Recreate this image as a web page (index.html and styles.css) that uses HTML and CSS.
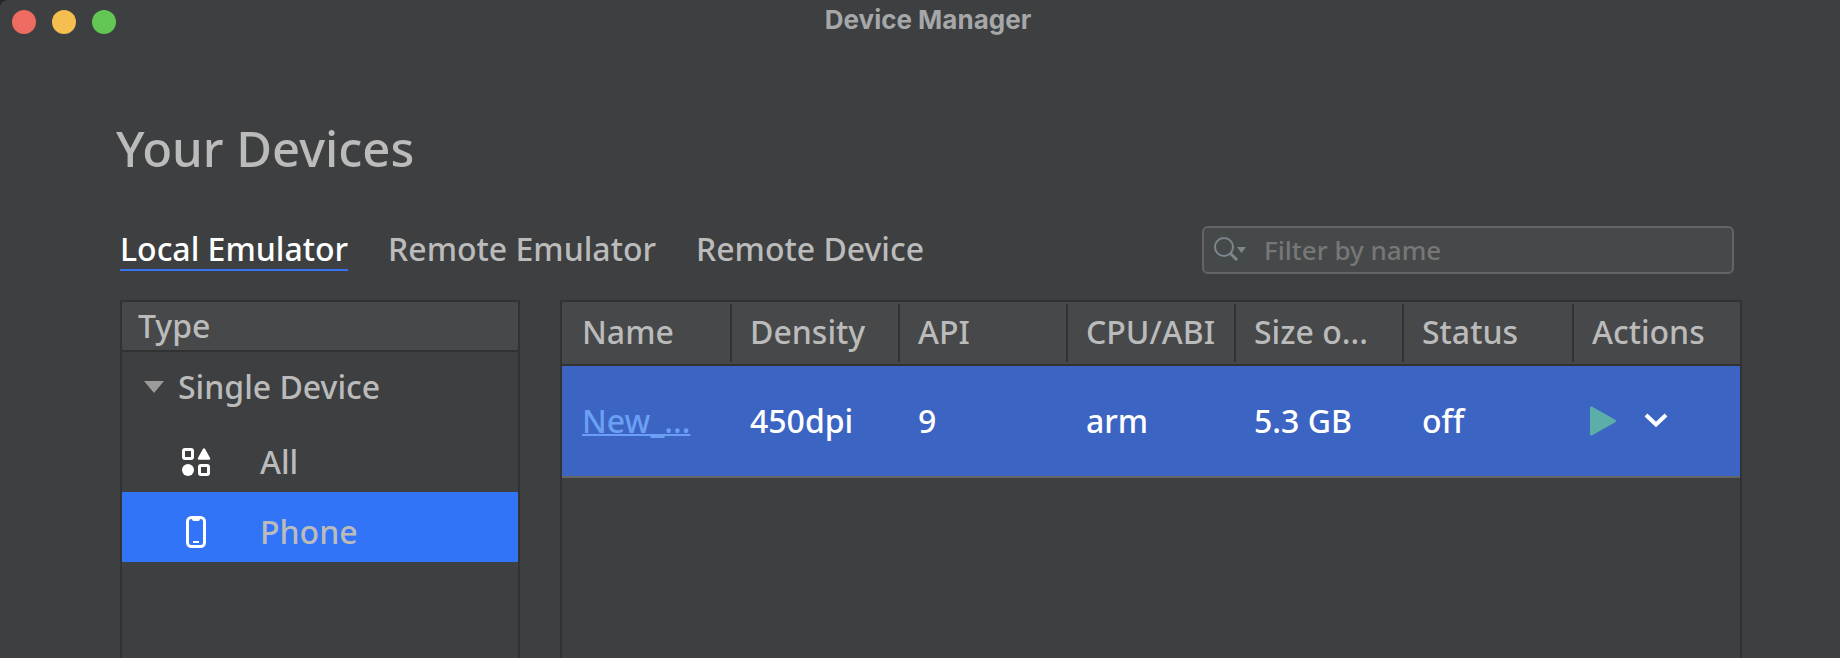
FILE: index.html
```html
<!DOCTYPE html>
<html lang="en">
<head>
<meta charset="utf-8">
<title>Device Manager</title>
<link rel="stylesheet" href="styles.css">
</head>
<body>
<div class="window">
  <header class="titlebar">
    <div class="lights">
      <button class="light close" aria-label="Close"></button>
      <button class="light minimize" aria-label="Minimize"></button>
      <button class="light zoom" aria-label="Zoom"></button>
    </div>
    <div class="window-title">Device Manager</div>
  </header>
  <main class="content">
    <h1 class="heading">Your Devices</h1>
    <div class="toolbar">
      <nav class="tabs">
        <button class="tab active">Local Emulator</button>
        <button class="tab">Remote Emulator</button>
        <button class="tab">Remote Device</button>
      </nav>
      <label class="search">
        <svg class="search-icon" width="34" height="28" viewBox="0 0 34 28" aria-hidden="true">
          <circle cx="10" cy="11" r="9" fill="none" stroke="#7d868d" stroke-width="2"/>
          <path d="M16 17l7 7" stroke="#7d868d" stroke-width="3"/>
          <path d="M23 11h9l-4.500 6z" fill="#7d868d"/>
        </svg>
        <input class="search-input" type="text" placeholder="Filter by name" aria-label="Filter by name">
      </label>
    </div>
    <div class="panels">
      <aside class="types">
        <h2 class="types-header">Type</h2>
        <button class="group">
          <svg class="caret" width="20" height="12" viewBox="0 0 20 12" aria-hidden="true"><path d="M0 0h20L10 12z" fill="#9b9b9b"/></svg>
          Single Device
        </button>
        <button class="type">
          <svg class="type-icon" width="32" height="32" viewBox="0 0 32 32" aria-hidden="true">
            <g fill="none" stroke="#fff" stroke-width="3"><rect x="3.500" y="3.500" width="9" height="9" rx="1.500"/><rect x="19.500" y="19.500" width="9" height="9" rx="1.500"/></g>
            <path d="M24 3.500l5 9h-10z" fill="#fff" stroke="#fff" stroke-width="2.500" stroke-linejoin="round"/>
            <circle cx="8" cy="24" r="6" fill="#fff"/>
          </svg>
          All
        </button>
        <button class="type selected">
          <svg class="type-icon" width="32" height="32" viewBox="0 0 32 32" aria-hidden="true">
            <rect x="7.500" y="1.500" width="17" height="29" rx="4" fill="none" stroke="#fff" stroke-width="3"/>
            <path d="M12 2h8v1q0 2-2 2h-4q-2 0-2-2z" fill="#fff"/>
            <path d="M13 26h6" stroke="#fff" stroke-width="2"/>
          </svg>
          Phone
        </button>
      </aside>
      <section class="devices">
        <table class="table">
          <colgroup>
            <col class="col-wide"><col class="col"><col class="col"><col class="col"><col class="col"><col class="col-wide"><col>
          </colgroup>
          <thead>
            <tr>
              <th><span class="head">Name</span></th>
              <th><span class="head">Density</span></th>
              <th><span class="head">API</span></th>
              <th><span class="head">CPU/ABI</span></th>
              <th><span class="head">Size o...</span></th>
              <th><span class="head">Status</span></th>
              <th><span class="head">Actions</span></th>
            </tr>
          </thead>
          <tbody>
            <tr>
              <td><a class="device-link" href="#">New_...</a></td>
              <td>450dpi</td>
              <td>9</td>
              <td>arm</td>
              <td>5.3 GB</td>
              <td>off</td>
              <td class="actions-cell">
                <div class="actions">
                  <button class="action" aria-label="Launch">
                    <svg width="28" height="32" viewBox="0 0 28 32" aria-hidden="true"><path d="M3.500 3v26l23-13z" fill="#5cafa8" stroke="#5cafa8" stroke-width="3" stroke-linejoin="round"/></svg>
                  </button>
                  <button class="action" aria-label="More actions">
                    <svg width="24" height="32" viewBox="0 0 24 32" aria-hidden="true"><path d="M2 10l10 9.500L22 10" fill="none" stroke="#fff" stroke-width="4"/></svg>
                  </button>
                </div>
              </td>
            </tr>
          </tbody>
        </table>
      </section>
    </div>
  </main>
</div>
</body>
</html>
```
FILE: styles.css
```css
* { box-sizing: border-box; }
html { background: #25282b; }
body {
  margin: 0;
  color: #bbb;
  font-family: "Noto Sans", sans-serif;
  font-size: 32px;
  font-weight: 500;
  line-height: 40px;
}
button {
  padding: 0;
  border: 0;
  background: none;
  color: inherit;
  font: inherit;
  text-align: left;
}
svg { display: block; flex: none; }
.window {
  display: flex;
  flex-direction: column;
  min-height: 100vh;
  border-top-left-radius: 8px;
  background: #3d3f40;
}
.titlebar {
  display: grid;
  grid-template-columns: 1fr auto 1fr;
  align-items: center;
  padding: 0 0 0 12px;
  height: 44px;
}
.lights { display: flex; gap: 16px; }
.light { width: 24px; height: 24px; border-radius: 50%; }
.close { background: #ed6b60; }
.minimize { background: #f5bf50; }
.zoom { background: #62c655; }
.window-title {
  padding: 0 0 4px 4px;
  color: #a5a7a8;
  font: bold 26px/40px Inter, sans-serif;
}
.content {
  display: flex;
  flex: 1;
  flex-direction: column;
  padding: 72px 98px 0 116px;
}
.heading {
  margin: 0 0 46px;
  font-size: 49px;
  font-weight: 500;
  line-height: 64px;
}
.toolbar {
  display: flex;
  align-items: center;
  justify-content: space-between;
  padding: 0 8px 0 4px;
  margin-bottom: 26px;
}
.tabs { display: flex; gap: 40px; }
.tab { border-bottom: 2px solid transparent; }
.active { border-color: #3574f0; color: #fff; }
.search {
  display: flex;
  align-items: center;
  width: 532px;
  height: 48px;
  padding: 0 10px;
  gap: 16px;
  border: 2px solid #646464;
  border-radius: 6px;
  background: #45494a;
}
.search-input {
  flex: 1;
  min-width: 0;
  padding: 0;
  border: 0;
  outline: 0;
  background: none;
  color: #bbb;
  font: 500 26px/40px "Noto Sans", sans-serif;
}
.search-input::placeholder { color: #777; opacity: 1; }
.panels { display: flex; flex: 1; gap: 40px; padding-left: 4px; }
.types, .devices {
  border: 2px solid #323232;
  border-bottom: 0;
}
.types { display: flex; flex-direction: column; width: 400px; }
.types-header {
  margin: 0;
  padding: 4px 16px;
  border-bottom: 2px solid #323232;
  background: #464849;
  font-size: 32px;
  font-weight: 500;
}
.group {
  display: flex;
  align-items: center;
  gap: 14px;
  height: 70px;
  padding-left: 22px;
}
.type {
  display: flex;
  align-items: center;
  gap: 48px;
  height: 70px;
  padding: 10px 0 0 58px;
}
.selected { background: #3174f8; }
.devices { flex: 1; min-width: 0; }
.table {
  width: 100%;
  border-spacing: 0;
  table-layout: fixed;
}
.col-wide { width: 170px; }
.col { width: 168px; }
.table th {
  height: 64px;
  padding: 2px 0;
  border-bottom: 2px solid #323232;
  background: #464849;
  font-weight: 500;
  text-align: left;
}
.head {
  display: block;
  padding: 8px 0 10px 18px;
  border-right: 2px solid #323232;
  white-space: nowrap;
}
.table th:first-child .head { padding-left: 20px; }
.table th:last-child .head { border-right: 0; }
.table td {
  height: 112px;
  padding: 0 0 0 18px;
  border-bottom: 2px solid #646464;
  background: #3c64c2;
  color: #fff;
  white-space: nowrap;
}
.table td:first-child { padding-left: 20px; }
.table .actions-cell { padding-left: 14px; }
.table .device-link { color: #6a9ff3; text-decoration-thickness: 2px; }
.actions { display: flex; align-items: center; gap: 28px; }
```
